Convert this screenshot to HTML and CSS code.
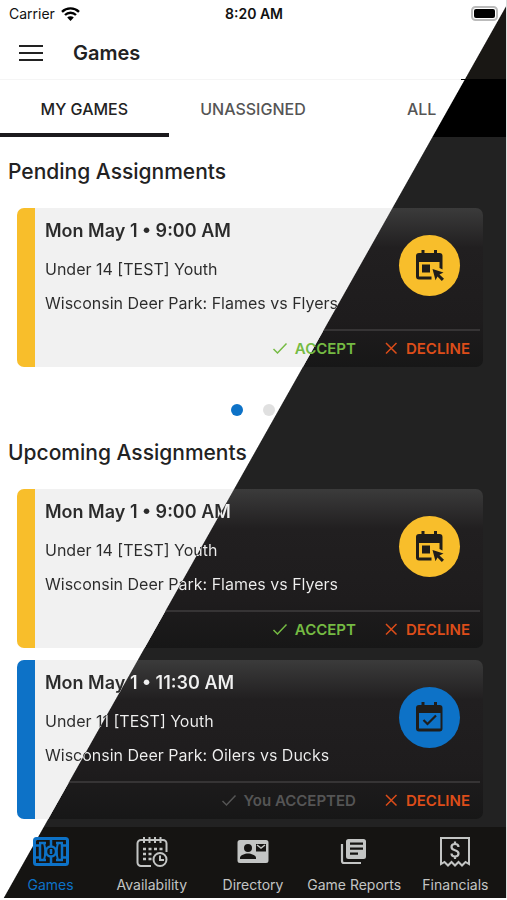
FILE: index.html
```html
<!DOCTYPE html>
<html lang="en">
<head>
<meta charset="utf-8">
<meta name="viewport" content="width=device-width, initial-scale=1">
<title>Games</title>
<link rel="stylesheet" href="styles.css">
</head>
<body>
<svg class="sprite" aria-hidden="true">
  <symbol id="check" viewBox="0 0 16 16"><path d="M1.500 9l4 4L14.500 3.500" fill="none" stroke="currentColor" stroke-width="1.500"/></symbol>
  <symbol id="cross" viewBox="0 0 16 16"><path d="M3 3l10.500 10.500M13.500 3L3 13.500" fill="none" stroke="currentColor" stroke-width="1.500"/></symbol>
  <symbol id="calendar-pick" viewBox="0 0 32 34">
    <path d="M5 4h2.500V1h3v3h9.500V1h3v3h2.500a3 3 0 0 1 3 3v13.500l-3-1.500V13H5v14.500h12.500v3H5a3 3 0 0 1-3-3V7a3 3 0 0 1 3-3z" fill="currentColor"/>
    <path d="M8 15.500h8v8H8z" fill="currentColor"/>
    <path d="M18.500 20l11 3.500-4 2 4.500 4.300-2.200 2.200-4.300-4.500-2 3.800z" fill="currentColor"/>
  </symbol>
  <symbol id="calendar-check" viewBox="0 0 32 34">
    <path d="M5 4h2.500V1h3v3h9.500V1h3v3h2.500a3 3 0 0 1 3 3v20.500a3 3 0 0 1-3 3H5a3 3 0 0 1-3-3V7a3 3 0 0 1 3-3zM5 12v15.500h21.500V12z" fill="currentColor" fill-rule="evenodd"/>
    <path d="M9.500 19l4 4 8.500-8.500" fill="none" stroke="currentColor" stroke-width="2.200"/>
  </symbol>
</svg>
<div class="screen">
  <div class="status">
    <span class="carrier">Carrier
      <svg width="19" height="14" viewBox="0 0 19 14" aria-hidden="true"><path d="M1 4.800a12.300 12.300 0 0 1 17 0M4 8a8 8 0 0 1 11 0" fill="none" stroke="#000" stroke-width="2.400"/><path d="M9.500 14L6.200 10.600a4.700 4.700 0 0 1 6.600 0z"/></svg>
    </span>
    <span class="clock">8:20 AM</span>
    <svg class="battery" width="28" height="15" viewBox="0 0 28 15" aria-hidden="true"><rect x="1" y="1" width="25" height="13" rx="3.500" fill="#fff" stroke="#bbb" stroke-width="2"/><rect x="3" y="3" width="21" height="9" rx="2"/></svg>
  </div>
  <header class="header">
    <button class="menu" aria-label="Menu"><span></span><span></span><span></span></button>
    <h1>Games</h1>
  </header>
  <div class="tabs" role="tablist">
    <button role="tab" aria-selected="true">MY GAMES</button>
    <button role="tab" aria-selected="false">UNASSIGNED</button>
    <button role="tab" aria-selected="false">ALL</button>
  </div>
  <main>
    <section>
      <h2>Pending Assignments</h2>
      <article class="card">
        <div class="details">
          <div>
            <h3 class="split">Mon May 1 • 9:00 AM</h3>
            <p class="split">Under 14 [TEST] Youth</p>
            <p class="split">Wisconsin Deer Park: Flames vs Flyers</p>
          </div>
          <span class="badge"><svg width="32" height="34"><use href="#calendar-pick"/></svg></span>
        </div>
        <div class="actions">
          <button class="accept"><svg width="16" height="16"><use href="#check"/></svg>ACCEPT</button>
          <button class="decline"><svg width="16" height="16"><use href="#cross"/></svg>DECLINE</button>
        </div>
      </article>
      <div class="pager"><button class="current" aria-label="Page 1"></button><button aria-label="Page 2"></button></div>
    </section>
    <section>
      <h2>Upcoming Assignments</h2>
      <article class="card">
        <div class="details">
          <div>
            <h3 class="split">Mon May 1 • 9:00 AM</h3>
            <p class="split">Under 14 [TEST] Youth</p>
            <p class="split">Wisconsin Deer Park: Flames vs Flyers</p>
          </div>
          <span class="badge"><svg width="32" height="34"><use href="#calendar-pick"/></svg></span>
        </div>
        <div class="actions">
          <button class="accept"><svg width="16" height="16"><use href="#check"/></svg>ACCEPT</button>
          <button class="decline"><svg width="16" height="16"><use href="#cross"/></svg>DECLINE</button>
        </div>
      </article>
      <article class="card accepted">
        <div class="details">
          <div>
            <h3 class="split">Mon May 1 • 11:30 AM</h3>
            <p class="split">Under 11 [TEST] Youth</p>
            <p class="split">Wisconsin Deer Park: Oilers vs Ducks</p>
          </div>
          <span class="badge"><svg width="32" height="34"><use href="#calendar-check"/></svg></span>
        </div>
        <div class="actions">
          <button class="done"><svg width="16" height="16"><use href="#check"/></svg>You ACCEPTED</button>
          <button class="decline"><svg width="16" height="16"><use href="#cross"/></svg>DECLINE</button>
        </div>
      </article>
    </section>
  </main>
  <nav class="nav">
    <a href="#games" class="active">
      <svg width="36" height="32" viewBox="0 0 36 32" fill="none" stroke="currentColor" stroke-width="2.500" aria-hidden="true"><rect x="1.500" y="2.500" width="33" height="26" rx="2" stroke-width="3"/><path d="M18 3v7M18 21v7M18 13v5M2 9.500h5v12H2M34 9.500h-5v12h5M6 7h7M23 7h7M6 24h7M23 24h7"/><circle cx="18" cy="15.500" r="5"/><path d="M11 7c1.500 5 1.500 12 0 17M25 7c-1.500 5-1.500 12 0 17" stroke-width="2"/></svg>
      Games</a>
    <a href="#availability">
      <svg width="34" height="32" viewBox="0 0 34 32" fill="none" stroke="currentColor" stroke-width="2" aria-hidden="true"><path d="M16 30H6a3.500 3.500 0 0 1-3.500-3.500v-19A3.500 3.500 0 0 1 6 4h22a3.500 3.500 0 0 1 3.500 3.500V16M9 1v6M14.500 1v6M20 1v6M25.500 1v6"/><path d="M8 13h3M13.500 13h3M19 13h3M24.500 13h3M8 18h3M13.500 18h3M8 23h3M13.500 23h3" stroke-width="2.500"/><circle cx="25" cy="23.500" r="6.500"/><path d="M25 19.500v4.500h4"/></svg>
      Availability</a>
    <a href="#directory">
      <svg width="32" height="32" viewBox="0 0 32 32" aria-hidden="true"><path fill="currentColor" fill-rule="evenodd" d="M3 4h26a2.500 2.500 0 0 1 2.500 2.500v18A2.500 2.500 0 0 1 29 27H3a2.500 2.500 0 0 1-2.500-2.500v-18A2.500 2.500 0 0 1 3 4zM11 8a4 4 0 1 0 0 8 4 4 0 0 0 0-8zM3 23h16v-1c0-3-5-4.500-8-4.500S3 19 3 22zM19 8v7.500h10V8z"/><path d="M20 9l4 3 4-3" fill="none" stroke="currentColor" stroke-width="1.500"/></svg>
      Directory</a>
    <a href="#reports">
      <svg width="28" height="32" viewBox="0 0 28 32" aria-hidden="true"><path fill="currentColor" fill-rule="evenodd" d="M8.500 3h15A2.500 2.500 0 0 1 26 5.500v15a2.500 2.500 0 0 1-2.500 2.500h-15A2.500 2.500 0 0 1 6 20.500v-15A2.500 2.500 0 0 1 8.500 3zM10 6.500v2.200h13V6.500zM10 11.500v2.200h13v-2.200zM10 16.500v2.200h8v-2.200z"/><path d="M2 8v17a2 2 0 0 0 2 2h17" fill="none" stroke="currentColor" stroke-width="2.200"/></svg>
      Game Reports</a>
    <a href="#financials">
      <svg width="32" height="32" viewBox="0 0 32 32" fill="none" stroke="currentColor" stroke-width="2" aria-hidden="true"><path d="M2 28V2h28v26l-3.500-2-3.500 3.500-3.500-3.500-3.500 3.500-3.500-3.500L9 29.500 5.500 26z"/><path d="M19.500 11c0-2-1.500-3-3.500-3s-3.500 1-3.500 3 1.500 2.700 3.500 3.200 3.500 1.300 3.500 3.300-1.500 3-3.500 3-3.500-1-3.500-3M16 5.500V8M16 20.500V23" stroke-width="2.200"/></svg>
      Financials</a>
  </nav>
</div>
</body>
</html>
```
FILE: styles.css
```css
* { box-sizing: border-box; }

:root {
  --edge: 50.2%;
  --edge-soft: calc(50.2% + 1px);
  --yellow: #f8be2b;
  --blue: #0d72c7;
  --card-light: linear-gradient(to bottom right, #f1f1f1 var(--edge), transparent var(--edge-soft)) fixed;
}

body {
  margin: 0;
  background: #fff;
  color: #222;
  font-family: Inter, "Liberation Sans", sans-serif;
}

h1, h2, h3, p { margin: 0; }

button {
  padding: 0;
  border: 0;
  background: none;
  font: inherit;
  color: inherit;
}

.sprite { position: absolute; width: 0; height: 0; }

.screen {
  display: flex;
  flex-direction: column;
  min-height: calc(100vh - 2px);
  border-right: 1px solid #ddd;
  background: linear-gradient(to bottom right, #fff var(--edge), #222 var(--edge-soft)) fixed;
}

/* The window is split along its diagonal: light theme above, dark theme below. */
.split {
  background: linear-gradient(to bottom right, #2b2b2b var(--edge), #f0f0f0 var(--edge-soft)) fixed;
  background-clip: text;
  -webkit-background-clip: text;
  -webkit-text-fill-color: transparent;
}

.status {
  display: grid;
  grid-template-columns: 1fr auto 1fr;
  align-items: center;
  height: 27px;
  padding: 0 7px 0 9px;
  font-size: 14px;
  color: #111;
  background: linear-gradient(to bottom right, #fff var(--edge), #191714 var(--edge-soft)) fixed;
}

.carrier { display: flex; align-items: center; gap: 6px; }
.clock { font-weight: 600; }
.battery { justify-self: end; }

.header {
  display: flex;
  align-items: center;
  gap: 30px;
  height: 53px;
  padding-left: 19px;
  border-bottom: 1px solid;
  border-image: linear-gradient(to right, #f5f5f5 91%, #000 91%) 1;
  background: linear-gradient(to bottom right, #fff var(--edge), #191714 var(--edge-soft)) fixed;
}

.menu { display: grid; gap: 5px; width: 24px; }
.menu span { height: 2px; background: #222; }

h1 { font-size: 20px; font-weight: 600; }

.tabs {
  display: grid;
  grid-template-columns: repeat(3, 1fr);
  height: 57px;
  background: linear-gradient(to bottom right, #fff var(--edge), #000 var(--edge-soft)) fixed;
}

.tabs button {
  padding-top: 4px;
  border-bottom: 4px solid transparent;
  font-size: 16px;
  font-weight: 500;
  color: #555;
}

.tabs [aria-selected="true"] { border-color: #1c1a1d; color: #222; }

main { flex: 1; }

h2 {
  padding: 22px 8px 0;
  font-size: 21px;
  line-height: 26px;
  font-weight: 500;
}

.card {
  --status-color: var(--yellow);
  height: 159px;
  margin: 23px 23px 0 17px;
  border-radius: 7px;
  overflow: hidden;
  background:
    linear-gradient(var(--status-color), var(--status-color)) left / 18px 100% no-repeat,
    var(--card-light),
    linear-gradient(#3b3b3b, #211f20 25%, #1e1c1d 70%, #171717);
}

.card + .card { margin-top: 12px; }
.card.accepted { --status-color: var(--blue); }

.details {
  display: flex;
  justify-content: space-between;
  height: 121px;
  padding: 10px 23px 0 28px;
}

h3 { font-size: 18px; line-height: 26px; font-weight: 600; }
.details p { margin-top: 12px; font-size: 16px; line-height: 22px; white-space: nowrap; }
.details h3 + p { margin-top: 14px; }

.badge {
  display: grid;
  place-items: center;
  flex: none;
  width: 61px;
  height: 61px;
  margin-top: 17px;
  border-radius: 50%;
  background: var(--status-color);
  color: #1f1d1a;
}

.actions {
  display: flex;
  justify-content: flex-end;
  gap: 27px;
  height: 38px;
  margin: 0 3px 0 18px;
  padding-right: 10px;
  background:
    var(--card-light),
    linear-gradient(#363435, #363435) top / 100% 2px no-repeat;
}

.actions button {
  display: flex;
  align-items: center;
  gap: 7px;
  font-size: 15px;
  font-weight: 600;
}

.accept { color: #75bb43; }
.decline { color: #dd4d19; }
.actions .done { color: #555; }

.pager {
  display: flex;
  justify-content: center;
  gap: 20px;
  height: 51px;
  padding-top: 37px;
}

.pager button {
  width: 12px;
  height: 12px;
  border-radius: 50%;
  background: linear-gradient(to bottom right, #e0e0e0 var(--edge), transparent var(--edge-soft)) fixed;
}

.pager .current { background: var(--blue); }

.nav {
  display: grid;
  grid-template-columns: repeat(5, 1fr);
  height: 71px;
  background: linear-gradient(to bottom right, #fff var(--edge), #151412 var(--edge-soft)) fixed;
}

.nav a {
  display: flex;
  flex-direction: column;
  align-items: center;
  gap: 8px;
  padding-top: 9px;
  font-size: 14px;
  line-height: 18px;
  color: #c3c5c4;
  text-decoration: none;
  white-space: nowrap;
}

.nav .active { color: var(--blue); }
```
